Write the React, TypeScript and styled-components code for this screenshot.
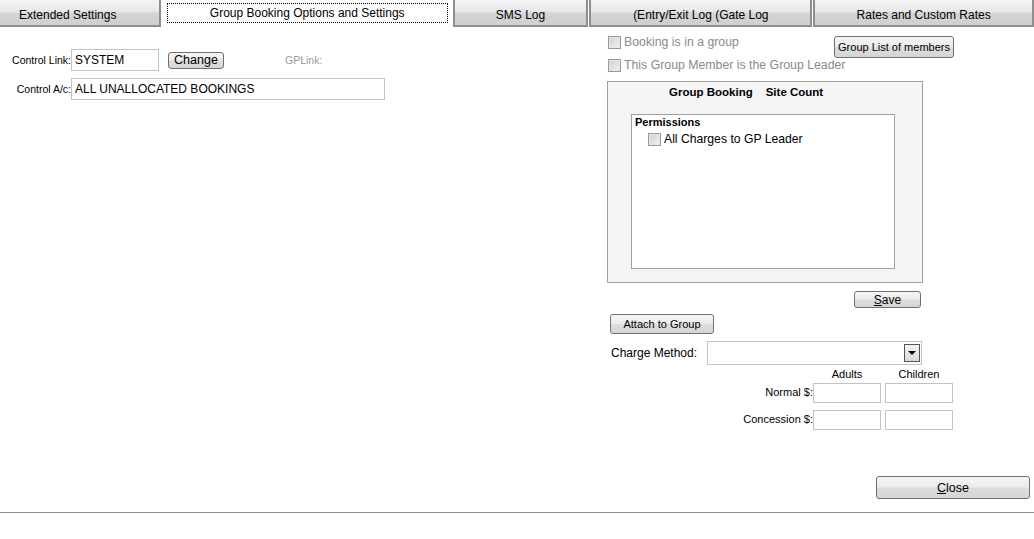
import styled, { createGlobalStyle } from 'styled-components';

const GlobalStyle = createGlobalStyle`
  html, body {
    margin: 0;
    padding: 0;
    background: #ffffff;
    font-family: "Liberation Sans", Arial, sans-serif;
    color: #000;
  }
`;

const Page = styled.div`
  width: 1034px;
  height: 539px;
  display: flex;
  flex-direction: column;
  overflow: hidden;
`;

const TabBar = styled.div`
  display: flex;
  height: 27px;
  gap: 1px;
`;

const Tab = styled.div<{ $w: number; $active?: boolean }>`
  width: ${(p) => p.$w}px;
  box-sizing: border-box;
  display: flex;
  align-items: center;
  justify-content: center;
  font-size: 12px;
  padding-top: ${(p) => (p.$active ? 0 : 4)}px;
  background: ${(p) => (p.$active ? '#fff' : 'linear-gradient(#f4f4f4 0%, #e8e8e8 45%, #d4d4d4 55%, #d0d0d0 100%)')};
  border: ${(p) => (p.$active ? 'none' : '2px solid #8e8e8e')};
  border-top: none;
  &:first-child {
    border-left: none;
    justify-content: flex-start;
    padding-left: 19px;
  }
`;

const FocusRect = styled.div`
  flex: 1;
  margin: 3px 4px 4px 5px;
  height: 20px;
  box-sizing: border-box;
  border: 1px dotted #000;
  display: flex;
  align-items: center;
  justify-content: center;
  font-size: 12px;
  padding-bottom: 1px;
`;

const Main = styled.div`
  display: flex;
  height: 449px;
`;

const LeftCol = styled.div`
  width: 607px;
  padding-top: 22px;
  display: flex;
  flex-direction: column;
  gap: 7px;
`;

const FieldRow = styled.div`
  display: flex;
  align-items: center;
`;

const Label = styled.span<{ $w?: number; $color?: string; $size?: number }>`
  width: ${(p) => (p.$w ? `${p.$w}px` : 'auto')};
  text-align: right;
  font-size: ${(p) => p.$size ?? 10.5}px;
  color: ${(p) => p.$color ?? '#000'};
  white-space: nowrap;
`;

const TextBox = styled.div<{ $w: number; $h?: number }>`
  width: ${(p) => p.$w}px;
  height: ${(p) => p.$h ?? 22}px;
  box-sizing: border-box;
  border: 1px solid #c3c3c3;
  font-size: 12px;
  display: flex;
  align-items: center;
  padding-left: 3px;
  background: #fff;
`;

const Button = styled.div<{ $w: number; $h: number; $size?: number }>`
  width: ${(p) => p.$w}px;
  height: ${(p) => p.$h}px;
  box-sizing: border-box;
  border: 1px solid #707070;
  border-radius: 3px;
  background: linear-gradient(#f6f6f6 0%, #ebebeb 48%, #dddddd 52%, #d6d6d6 100%);
  display: flex;
  align-items: center;
  justify-content: center;
  font-size: ${(p) => p.$size ?? 11}px;
  flex-shrink: 0;
`;

const RightCol = styled.div`
  width: 350px;
  padding-top: 8px;
  display: flex;
  flex-direction: column;
`;

const CheckRow = styled.div<{ $h: number; $mt?: number }>`
  display: flex;
  align-items: center;
  justify-content: space-between;
  height: ${(p) => p.$h}px;
  margin-top: ${(p) => p.$mt ?? 0}px;
  padding-left: 1px;
  width: 346px;
`;

const CheckLabel = styled.label<{ $color?: string; $size?: number }>`
  display: flex;
  align-items: center;
  gap: 3px;
  font-size: ${(p) => p.$size ?? 12.3}px;
  color: ${(p) => p.$color ?? '#8a8a8a'};
`;

const Box = styled.span`
  width: 13px;
  height: 13px;
  box-sizing: border-box;
  border: 1px solid #9a9a9a;
  background: linear-gradient(135deg, #d0d0d0, #f2f2f2);
  box-shadow: inset 0 0 0 1px #e6e6e6;
  display: inline-block;
`;

const Panel = styled.div`
  margin-top: 7px;
  width: 316px;
  height: 202px;
  box-sizing: border-box;
  border: 1px solid #a0a0a0;
  background: #f5f5f5;
  display: flex;
  flex-direction: column;
  align-items: flex-start;
`;

const PanelTitle = styled.div`
  display: flex;
  gap: 13px;
  font-size: 11.5px;
  font-weight: bold;
  margin-top: 4px;
  padding-left: 61px;
  height: 14px;
`;

const InnerBox = styled.div`
  margin-top: 14px;
  margin-left: 23px;
  width: 264px;
  height: 155px;
  box-sizing: border-box;
  border: 1px solid #a0a0a0;
  background: #fff;
  padding: 1px 3px;
`;

const SubTitle = styled.div`
  font-size: 11px;
  font-weight: bold;
`;

const PermissionItem = styled.div`
  padding-left: 13px;
  margin-top: 4px;
`;

const SaveRow = styled.div`
  display: flex;
  justify-content: flex-end;
  width: 314px;
  margin-top: 8px;
`;

const AttachRow = styled.div`
  margin-top: 6px;
  padding-left: 3px;
`;

const ChargeRow = styled.div`
  margin-top: 7px;
  display: flex;
  align-items: center;
  padding-left: 4px;
  gap: 10px;
`;

const Select = styled.div`
  width: 215px;
  height: 24px;
  box-sizing: border-box;
  border: 1px solid #c3c3c3;
  background: #fff;
  display: flex;
  justify-content: flex-end;
  align-items: center;
  padding-right: 1px;
`;

const Arrow = styled.div`
  width: 16px;
  height: 18px;
  box-sizing: border-box;
  border: 1px solid #555;
  background: linear-gradient(#f5f5f5, #d8d8d8);
  display: flex;
  align-items: center;
  justify-content: center;
`;

const Grid = styled.div`
  display: grid;
  grid-template-columns: 206px 72px 68px;
  row-gap: 7px;
  align-items: center;
  margin-top: 4px;
`;

const ColHead = styled.div`
  width: 68px;
  font-size: 11px;
  text-align: center;
  height: 10px;
  line-height: 10px;
  margin-bottom: -3px;
`;

const GridLabel = styled.span`
  font-size: 11px;
  text-align: right;
  white-space: nowrap;
  margin-top: -2px;
`;

const Footer = styled.div`
  display: flex;
  justify-content: flex-end;
  padding-right: 4px;
`;

const Rule = styled.div`
  margin-top: 13px;
  height: 1px;
  background: #8f8f8f;
`;

const Check = ({ text, color, size }: { text: string; color?: string; size?: number }) => (
  <CheckLabel $color={color} $size={size}>
    <Box />
    {text}
  </CheckLabel>
);

const App = () => {
  return (
    <Page>
      <GlobalStyle />
      <TabBar>
        <Tab $w={161}>Extended Settings</Tab>
        <Tab $w={290} $active>
          <FocusRect>Group Booking Options and Settings</FocusRect>
        </Tab>
        <Tab $w={136}>SMS Log</Tab>
        <Tab $w={223}>(Entry/Exit Log (Gate Log</Tab>
        <Tab $w={221}>Rates and Custom Rates</Tab>
      </TabBar>
      <Main>
        <LeftCol>
          <FieldRow>
            <Label $w={71}>Control Link:</Label>
            <TextBox $w={88}>SYSTEM</TextBox>
            <div style={{ width: 9 }} />
            <Button $w={56} $h={17} $size={12.5}>Change</Button>
            <Label $color="#999" style={{ marginLeft: 61 }}>GPLink:</Label>
          </FieldRow>
          <FieldRow>
            <Label $w={71}>Control A/c:</Label>
            <TextBox $w={314}>ALL UNALLOCATED BOOKINGS</TextBox>
          </FieldRow>
        </LeftCol>
        <RightCol>
          <CheckRow $h={14}>
            <Check text="Booking is in a group" />
            <Button $w={120} $h={22} $size={11} style={{ marginTop: 10 }}>
              Group List of members
            </Button>
          </CheckRow>
          <CheckRow $h={18} $mt={7}>
            <Check text="This Group Member is the Group Leader" />
          </CheckRow>
          <Panel>
            <PanelTitle>
              <span>Group Booking</span>
              <span>Site Count</span>
            </PanelTitle>
            <InnerBox>
              <SubTitle>Permissions</SubTitle>
              <PermissionItem>
                <Check text="All Charges to GP Leader" color="#000" size={12.2} />
              </PermissionItem>
            </InnerBox>
          </Panel>
          <SaveRow>
            <Button $w={67} $h={17} $size={12}>
              <span><u>S</u>ave</span>
            </Button>
          </SaveRow>
          <AttachRow>
            <Button $w={104} $h={20} $size={11}>Attach to Group</Button>
          </AttachRow>
          <ChargeRow>
            <Label $size={12}>Charge Method:</Label>
            <Select>
              <Arrow>
                <svg width="8" height="5" viewBox="0 0 8 5">
                  <polygon points="0,0 8,0 4,4" fill="#000" />
                </svg>
              </Arrow>
            </Select>
          </ChargeRow>
          <Grid>
            <div />
            <ColHead>Adults</ColHead>
            <ColHead>Children</ColHead>
            <GridLabel>Normal $:</GridLabel>
            <TextBox $w={68} $h={20} />
            <TextBox $w={68} $h={20} />
            <GridLabel>Concession $:</GridLabel>
            <TextBox $w={68} $h={20} />
            <TextBox $w={68} $h={20} />
          </Grid>
        </RightCol>
      </Main>
      <Footer>
        <Button $w={154} $h={23} $size={12.5}>
          <span><u>C</u>lose</span>
        </Button>
      </Footer>
      <Rule />
    </Page>
  );
};

export default App;
